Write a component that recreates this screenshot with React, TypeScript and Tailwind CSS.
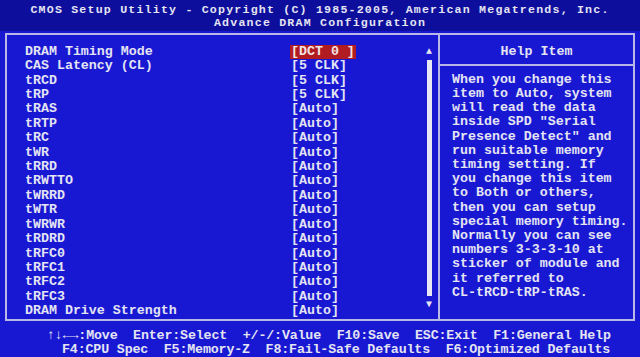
const rows: [string, string][] = [
  ["DRAM Timing Mode", "[DCT 0 ]"],
  ["CAS Latency (CL)", "[5 CLK]"],
  ["tRCD", "[5 CLK]"],
  ["tRP", "[5 CLK]"],
  ["tRAS", "[Auto]"],
  ["tRTP", "[Auto]"],
  ["tRC", "[Auto]"],
  ["tWR", "[Auto]"],
  ["tRRD", "[Auto]"],
  ["tRWTTO", "[Auto]"],
  ["tWRRD", "[Auto]"],
  ["tWTR", "[Auto]"],
  ["tWRWR", "[Auto]"],
  ["tRDRD", "[Auto]"],
  ["tRFC0", "[Auto]"],
  ["tRFC1", "[Auto]"],
  ["tRFC2", "[Auto]"],
  ["tRFC3", "[Auto]"],
  ["DRAM Drive Strength", "[Auto]"],
];

const help = [
  "When you change this",
  "item to Auto, system",
  "will read the data",
  'inside SPD "Serial',
  'Presence Detect" and',
  "run suitable memory",
  "timing setting. If",
  "you change this item",
  "to Both or others,",
  "then you can setup",
  "special memory timing.",
  "Normally you can see",
  "numbers 3-3-3-10 at",
  "sticker of module and",
  "it referred to",
  "CL-tRCD-tRP-tRAS.",
];

export default function App() {
  return (
    <div className="flex h-[357px] w-[640px] flex-col overflow-hidden bg-[#1818d2] font-['Liberation_Mono',monospace] text-[13.3px] font-bold text-[#e4e4f2]">
      {/* title band */}
      <div className="flex h-[31px] flex-col items-center bg-[#0e0e9c] pt-[3px] text-[11.6px] leading-[13px] tracking-[1.2px]">
        <div className="whitespace-pre">CMOS Setup Utility - Copyright (C) 1985-2005, American Megatrends, Inc.</div>
        <div className="whitespace-pre">Advance DRAM Configuration</div>
      </div>

      {/* main box */}
      <div className="mx-[5px] mt-[2px] flex h-[290px] border-2 border-[#b8b8e6]">
        <div className="flex flex-1 pt-[10px]">
          <div className="flex flex-1 flex-col pl-[18px] leading-[14.4px]">
            {rows.map(([label, value], i) => (
              <div key={label} className="flex whitespace-pre">
                <span className="w-[266px]">{label}</span>
                <span className={i === 0 ? "-ml-[1px] bg-[#b01c22] px-[1px] text-[#f4e4e4]" : ""}>{value}</span>
              </div>
            ))}
          </div>
          <div className="flex w-[14px] flex-col items-center pr-[4px]">
            <span className="text-[10px] leading-[14px]">▲</span>
            <div className="mt-[1px] h-[236px] w-[5px] bg-[#e8e8f4]" />
            <span className="mt-[2px] text-[10px] leading-[14px]">▼</span>
          </div>
        </div>
        <div className="flex w-[195px] flex-col border-l-2 border-[#b8b8e6]">
          <div className="flex h-[31px] items-center justify-center border-b-2 border-[#b8b8e6] pt-[6px]">
            Help Item
          </div>
          <div className="flex flex-col pl-[12px] pt-[7px] leading-[14.2px]">
            {help.map((line) => (
              <div key={line} className="whitespace-pre">{line}</div>
            ))}
          </div>
        </div>
      </div>

      {/* key legend */}
      <div className="flex flex-col pt-[8px] leading-[14px] tracking-[-0.15px]">
        <div className="whitespace-pre pl-[47px]">↑↓←→:Move  Enter:Select  +/-/:Value  F10:Save  ESC:Exit  F1:General Help</div>
        <div className="whitespace-pre pl-[62px]">F4:CPU Spec  F5:Memory-Z  F8:Fail-Safe Defaults  F6:Optimized Defaults</div>
      </div>
    </div>
  );
}
